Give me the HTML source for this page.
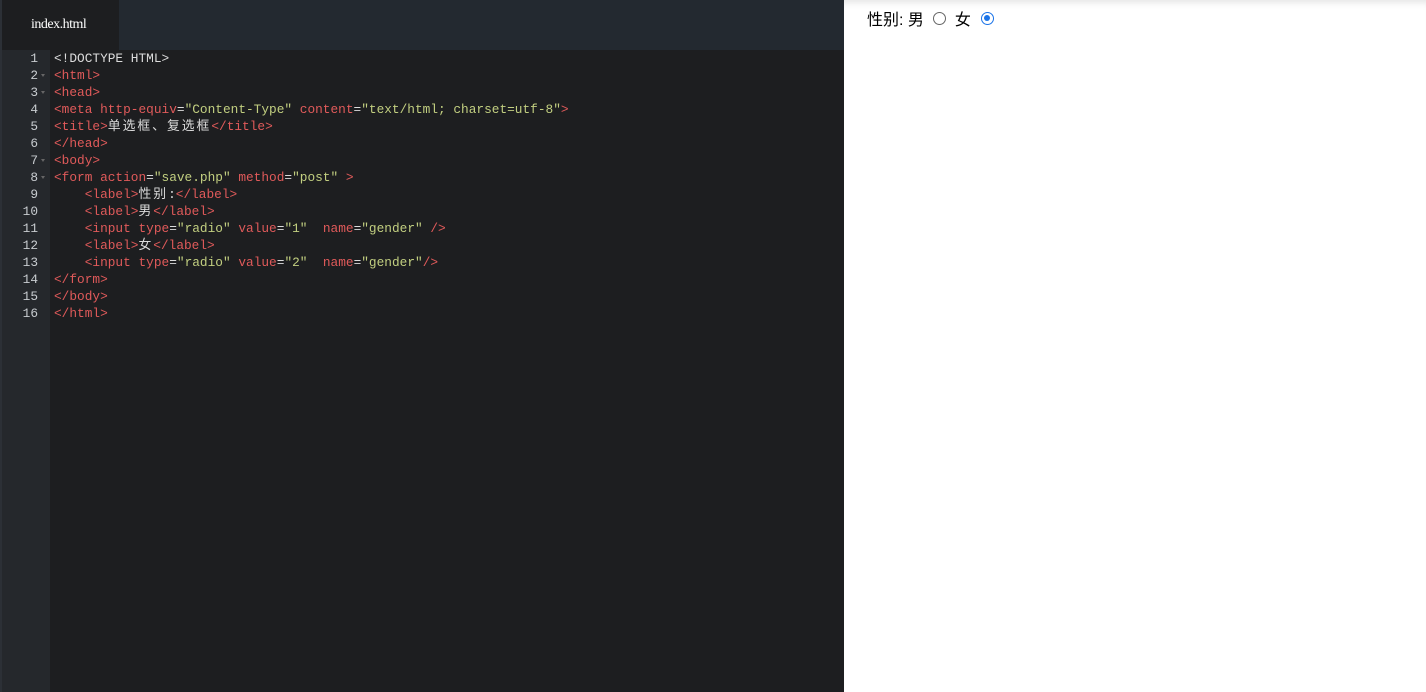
<!DOCTYPE html>
<html><head><meta charset="utf-8"><style>
body{margin:0;width:1426px;height:692px;overflow:hidden;background:#fff;font-family:"Liberation Sans","Noto Sans CJK SC",sans-serif;position:relative}
#ed{position:absolute;left:0;top:0;width:844px;height:692px;background:#1d1e20}
#tabs{position:absolute;left:0;top:0;width:844px;height:50px;background:#232930}
#tab{position:absolute;left:2px;top:0;width:117px;height:50px;background:#1d1e20;color:#fff;font:14px "Liberation Serif",serif;line-height:50px;text-indent:29px;letter-spacing:-0.5px}
#gut{position:absolute;left:2px;top:50px;width:48px;height:642px;background:#25282c}
#edge{position:absolute;left:0;top:0;width:2px;height:692px;background:#2c3036}
.ln{position:absolute;left:0;width:36px;text-align:right;color:#c8ccd0;font:12.8px "Liberation Mono",monospace;line-height:17px}
.ar{position:absolute;left:39px;width:0;height:0;border-left:2.5px solid transparent;border-right:2.5px solid transparent;border-top:3px solid #666}
#code{position:absolute;left:54px;top:50px;font:12.8px "Liberation Mono","Noto Sans CJK SC",monospace;line-height:17px;color:#dcdcdc;white-space:pre}
.c{letter-spacing:2px}
.t{color:#e05a5a}.s{color:#c2cf80}
#pv{position:absolute;left:844px;top:0;width:582px;height:692px;background:#fff;box-shadow:inset 0 8px 8px -6px rgba(0,0,0,.12)}
#pv .f{position:absolute;left:23px;top:6px;font-size:16px;color:#000;display:flex;align-items:center}
.r{display:inline-block;width:13px;height:13px;border:1px solid #666;border-radius:50%;margin:0 9px 0 9px;box-sizing:border-box}
.rc{border:1.5px solid #1a73e8;position:relative;margin-left:10px}
.rc:after{content:"";position:absolute;left:2px;top:2px;width:6px;height:6px;border-radius:50%;background:#1a73e8}
</style></head><body>
<div id="ed">
<div id="tabs"><div id="tab">index.html</div></div>
<div id="gut">
<div class="ln" style="top:0">1</div>
<div class="ln" style="top:17px">2</div><div class="ar" style="top:24px"></div>
<div class="ln" style="top:34px">3</div><div class="ar" style="top:41px"></div>
<div class="ln" style="top:51px">4</div>
<div class="ln" style="top:68px">5</div>
<div class="ln" style="top:85px">6</div>
<div class="ln" style="top:102px">7</div><div class="ar" style="top:109px"></div>
<div class="ln" style="top:119px">8</div><div class="ar" style="top:126px"></div>
<div class="ln" style="top:136px">9</div>
<div class="ln" style="top:153px">10</div>
<div class="ln" style="top:170px">11</div>
<div class="ln" style="top:187px">12</div>
<div class="ln" style="top:204px">13</div>
<div class="ln" style="top:221px">14</div>
<div class="ln" style="top:238px">15</div>
<div class="ln" style="top:255px">16</div>
</div>
<div id="edge"></div>
<div id="code">&lt;!DOCTYPE HTML&gt;
<span class="t">&lt;html&gt;</span>
<span class="t">&lt;head&gt;</span>
<span class="t">&lt;meta http-equiv</span>=<span class="s">"Content-Type"</span> <span class="t">content</span>=<span class="s">"text/html; charset=utf-8"</span><span class="t">&gt;</span>
<span class="t">&lt;title&gt;</span><span class="c">单选框、复选框</span><span class="t">&lt;/title&gt;</span>
<span class="t">&lt;/head&gt;</span>
<span class="t">&lt;body&gt;</span>
<span class="t">&lt;form action</span>=<span class="s">"save.php"</span> <span class="t">method</span>=<span class="s">"post"</span> <span class="t">&gt;</span>
    <span class="t">&lt;label&gt;</span><span class="c">性别</span>:<span class="t">&lt;/label&gt;</span>
    <span class="t">&lt;label&gt;</span><span class="c">男</span><span class="t">&lt;/label&gt;</span>
    <span class="t">&lt;input type</span>=<span class="s">"radio"</span> <span class="t">value</span>=<span class="s">"1"</span>  <span class="t">name</span>=<span class="s">"gender"</span> <span class="t">/&gt;</span>
    <span class="t">&lt;label&gt;</span><span class="c">女</span><span class="t">&lt;/label&gt;</span>
    <span class="t">&lt;input type</span>=<span class="s">"radio"</span> <span class="t">value</span>=<span class="s">"2"</span>  <span class="t">name</span>=<span class="s">"gender"</span><span class="t">/&gt;</span>
<span class="t">&lt;/form&gt;</span>
<span class="t">&lt;/body&gt;</span>
<span class="t">&lt;/html&gt;</span></div>
</div>
<div id="pv"><div class="f">性别: 男<span class="r"></span>女<span class="r rc"></span></div></div>
</body></html>
